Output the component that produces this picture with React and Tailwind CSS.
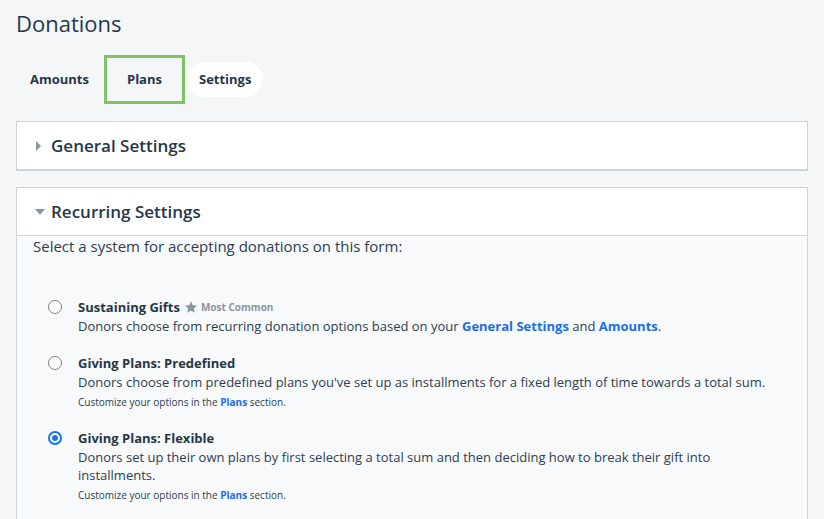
import { useState } from 'react';

const font = { fontFamily: '"Open Sans", "Liberation Sans", sans-serif' };

function Caret({ open }) {
  return open ? (
    <svg width="10" height="6" viewBox="0 0 10 6" className="mr-[6px]">
      <path d="M0 0 L10 0 L5 6 Z" fill="#8a969f" />
    </svg>
  ) : (
    <svg width="5" height="10" viewBox="0 0 5 10" className="mr-[10px]">
      <path d="M0 0 L5 5 L0 10 Z" fill="#8a969f" />
    </svg>
  );
}

function Option({ value, selected, onSelect, title, badge, children, note }) {
  const checked = selected === value;
  return (
    <div className="flex items-start">
      <button
        onClick={() => onSelect(value)}
        className={`mt-[1px] w-[14px] h-[14px] rounded-full border flex items-center justify-center bg-white shrink-0 ${checked ? 'border-[#1a73f0] border-2' : 'border-[#7b7f83]'}`}
      >
        {checked && <span className="w-[6px] h-[6px] rounded-full bg-[#1a73f0]" />}
      </button>
      <div className="ml-[16px]">
        <div className="flex items-center text-[13px] font-bold text-[#253746] leading-4">
          {title}
          {badge && (
            <span className="flex items-center ml-[4px] text-[10px] text-[#8a969f] font-bold">
              <svg width="14" height="14" viewBox="0 0 24 24" className="mr-[3px]">
                <path d="M12 2l3 6.9 7.5.7-5.7 5 1.7 7.4L12 18.2 5.5 22l1.7-7.4-5.7-5 7.5-.7z" fill="#8a969f" />
              </svg>
              {badge}
            </span>
          )}
        </div>
        <div className="mt-[2px] text-[13px] text-[#2d3e4e] leading-[18px] pr-[20px]">{children}</div>
        {note && <div className="mt-[4px] text-[10px] text-[#2d3e4e]">{note}</div>}
      </div>
    </div>
  );
}

export default function App() {
  const [tab, setTab] = useState('Plans');
  const [selected, setSelected] = useState('flexible');
  const plansLink = <a href="#" className="text-[#1c6fe3] font-bold">Plans</a>;

  return (
    <div className="min-h-screen bg-[#f5f6f8] px-[16px] pt-[9px] text-[#253746]" style={font}>
      <h1 className="text-[22px] leading-[28px] text-[#23384b]">Donations</h1>

      <div className="flex items-center mt-[18px] h-[49px]">
        {['Amounts', 'Plans', 'Settings'].map((t) => (
          <button
            key={t}
            onClick={() => setTab(t)}
            className={`text-[13px] font-bold text-[#253746] ${
              t === 'Plans'
                ? 'h-[49px] w-[81px] border-[3px] border-[#7dc464] ml-[1px]'
                : t === 'Settings'
                ? 'h-[35px] px-[12px] bg-white rounded-full ml-[2px]'
                : 'h-[35px] px-[14px]'
            }`}
          >
            {t}
          </button>
        ))}
      </div>

      <div className="mt-[17px] w-[792px] bg-white border border-[#ccd5d8] border-b-2 h-[50px] flex items-center pl-[19px]">
        <Caret />
        <span className="text-[17px] font-semibold text-[#253746]">General Settings</span>
      </div>

      <div className="mt-[16px] w-[792px] border border-[#ccd5d8] border-b-0">
        <div className="bg-white h-[48px] flex items-center pl-[18px] border-b border-[#ccd5d8]">
          <Caret open />
          <span className="text-[17px] font-semibold text-[#253746]">Recurring Settings</span>
        </div>
        <div className="bg-[#f8f9fa] pl-[16px] pt-0 pb-[20px]">
          <p className="text-[15px] text-[#2d3e4e] leading-5">Select a system for accepting donations on this form:</p>
          <div className="pl-[15px] mt-[43px] flex flex-col gap-[20px]">
            <Option value="sustaining" selected={selected} onSelect={setSelected} title="Sustaining Gifts" badge="Most Common">
              Donors choose from recurring donation options based on your{' '}
              <a href="#" className="text-[#1c6fe3] font-bold">General Settings</a> and{' '}
              <a href="#" className="text-[#1c6fe3] font-bold">Amounts</a>.
            </Option>
            <Option
              value="predefined"
              selected={selected}
              onSelect={setSelected}
              title="Giving Plans: Predefined"
              note={<>Customize your options in the {plansLink} section.</>}
            >
              Donors choose from predefined plans you've set up as installments for a fixed length of time towards a total sum.
            </Option>
            <Option
              value="flexible"
              selected={selected}
              onSelect={setSelected}
              title="Giving Plans: Flexible"
              note={<>Customize your options in the {plansLink} section.</>}
            >
              Donors set up their own plans by first selecting a total sum and then deciding how to break their gift into installments.
            </Option>
          </div>
        </div>
      </div>
    </div>
  );
}
